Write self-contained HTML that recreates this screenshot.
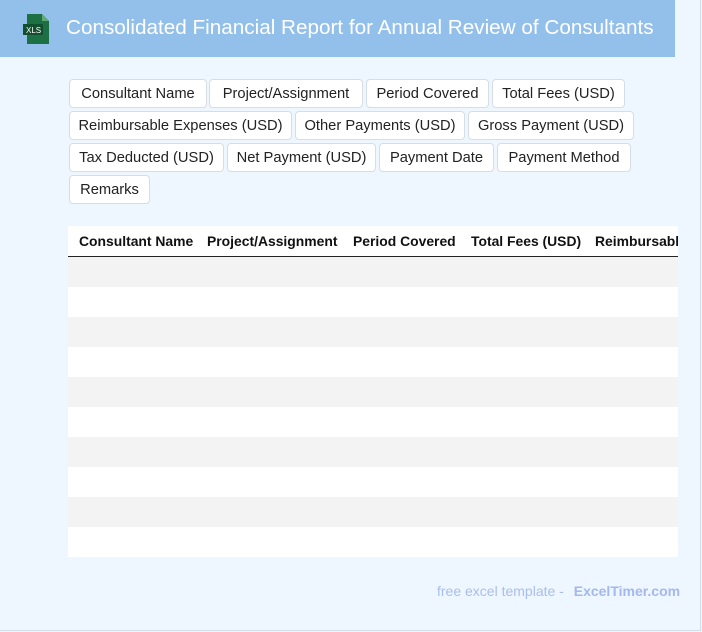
<!DOCTYPE html>
<html><head><meta charset="utf-8"><style>
*{margin:0;padding:0;box-sizing:border-box}
body{width:702px;height:632px;background:#eef6ff;font-family:"Liberation Sans",Arial,sans-serif;position:relative;overflow:hidden}
.frame{position:absolute;left:0;top:0;width:701px;height:631px;border-right:1px solid #d4dce6;border-bottom:1px solid #d4dce6}
.hdr{position:absolute;left:0;top:0;width:675px;height:57px;background:#92c0ea}
.hdr h1{position:absolute;left:66px;top:16px;font-size:20.7px;font-weight:normal;color:#fff;white-space:nowrap}
.tag{position:absolute;height:29px;background:#fff;border:1px solid #d6dde5;border-radius:4px;font-size:14.7px;color:#222;line-height:28px;text-align:center;white-space:nowrap;overflow:hidden}
.tbl{position:absolute;left:68px;top:226px;width:610px;height:331px;background:#fff;overflow:hidden}
.th{height:31px;border-bottom:1px solid #222;font-size:13.9px;font-weight:bold;color:#111;white-space:nowrap;line-height:30px;position:relative}
.th span{position:absolute;top:0}
.row{height:30px}
.foot{position:absolute;top:583px;left:437px;font-size:14px;color:#a9bdf0;white-space:nowrap}
.foot b{color:#a4b8ee;margin-left:6px}
</style></head><body>
<div class="frame"></div>
<div class="hdr">
<svg style="position:absolute;left:22px;top:13px" width="29" height="32" viewBox="0 0 29 32">
<path d="M5 1h15l7 7v23H5z" fill="#1d7044"/>
<path d="M20 1v7h7z" fill="#5fa878"/>
<rect x="1" y="11" width="20" height="11" fill="#134e2e"/>
<text x="4" y="20" font-size="8" fill="#fff" font-family="Liberation Sans">XLS</text>
</svg>
<h1>Consolidated Financial Report for Annual Review of Consultants</h1>
</div>
<div class="tag" style="left:69px;top:79px;width:138px">Consultant Name</div>
<div class="tag" style="left:209px;top:79px;width:154px">Project/Assignment</div>
<div class="tag" style="left:366px;top:79px;width:123px">Period Covered</div>
<div class="tag" style="left:492px;top:79px;width:133px">Total Fees (USD)</div>
<div class="tag" style="left:69px;top:111px;width:223px">Reimbursable Expenses (USD)</div>
<div class="tag" style="left:295px;top:111px;width:170px">Other Payments (USD)</div>
<div class="tag" style="left:468px;top:111px;width:166px">Gross Payment (USD)</div>
<div class="tag" style="left:69px;top:143px;width:155px">Tax Deducted (USD)</div>
<div class="tag" style="left:227px;top:143px;width:149px">Net Payment (USD)</div>
<div class="tag" style="left:379px;top:143px;width:115px">Payment Date</div>
<div class="tag" style="left:497px;top:143px;width:134px">Payment Method</div>
<div class="tag" style="left:69px;top:175px;width:81px">Remarks</div>
<div class="tbl">
<div class="th"><span style="left:11px">Consultant Name</span><span style="left:139px">Project/Assignment</span><span style="left:285px">Period Covered</span><span style="left:403px">Total Fees (USD)</span><span style="left:527px">Reimbursable Expenses (USD)</span></div>
<div>
<div class="row" style="background:#f3f3f3"></div><div class="row" style="background:#fff"></div>
<div class="row" style="background:#f3f3f3"></div><div class="row" style="background:#fff"></div>
<div class="row" style="background:#f3f3f3"></div><div class="row" style="background:#fff"></div>
<div class="row" style="background:#f3f3f3"></div><div class="row" style="background:#fff"></div>
<div class="row" style="background:#f3f3f3"></div><div class="row" style="background:#fff"></div>
</div>
</div>
<div class="foot">free excel template - <b>ExcelTimer.com</b></div>
</body></html>
